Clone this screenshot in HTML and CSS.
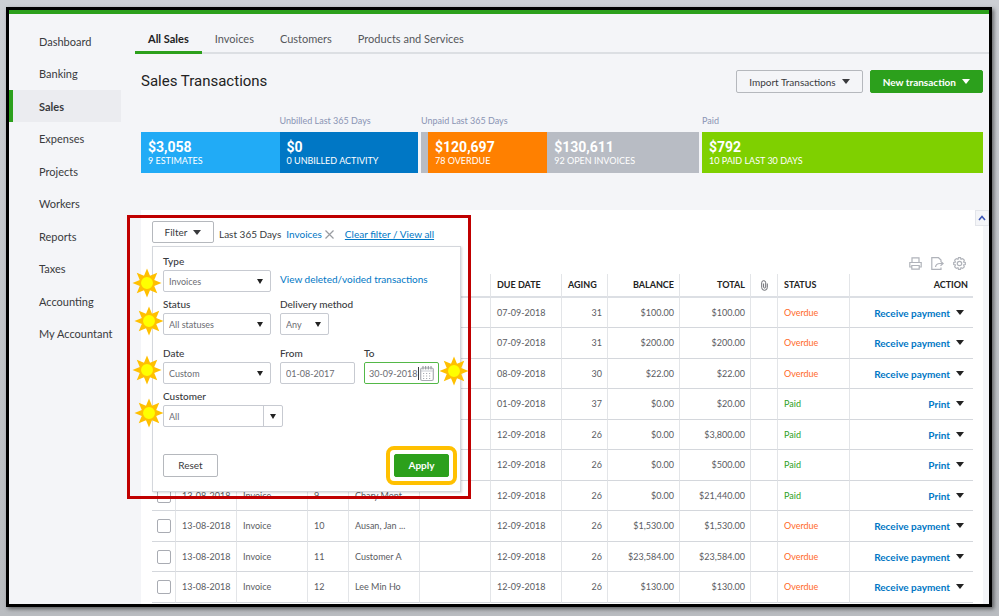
FILE: index.html
```html
<!DOCTYPE html>
<html lang="en">
<head>
  <meta charset="UTF-8" />
  <meta name="viewport" content="width=device-width, initial-scale=1.0" />
  <title>Sales Transactions</title>
  <link rel="stylesheet" href="styles.css">
</head>
<body>
  <svg class="sprite" aria-hidden="true">
    <symbol id="sun" viewBox="0 0 30 30">
      <g fill="#ffc000">
        <path id="ray" d="M15 0.5 L18.5 9 H11.5 Z" />
        <use href="#ray" transform="rotate(45 15 15)" />
        <use href="#ray" transform="rotate(90 15 15)" />
        <use href="#ray" transform="rotate(135 15 15)" />
        <use href="#ray" transform="rotate(180 15 15)" />
        <use href="#ray" transform="rotate(225 15 15)" />
        <use href="#ray" transform="rotate(270 15 15)" />
        <use href="#ray" transform="rotate(315 15 15)" />
      </g>
      <circle cx="15" cy="15" r="6.7" fill="#ffff00" stroke="#ffc000" stroke-width="1.5" />
    </symbol>
  </svg>

  <div class="frame">
    <div class="app">
      <nav class="sidebar">
        <ul>
          <li><a href="#">Dashboard</a></li>
          <li><a href="#">Banking</a></li>
          <li class="active"><a href="#">Sales</a></li>
          <li><a href="#">Expenses</a></li>
          <li><a href="#">Projects</a></li>
          <li><a href="#">Workers</a></li>
          <li><a href="#">Reports</a></li>
          <li><a href="#">Taxes</a></li>
          <li><a href="#">Accounting</a></li>
          <li><a href="#">My Accountant</a></li>
        </ul>
      </nav>

      <main>
        <div class="tabs">
          <a href="#" class="current">All Sales</a>
          <a href="#">Invoices</a>
          <a href="#">Customers</a>
          <a href="#">Products and Services</a>
        </div>

        <div class="content">
          <header class="title-row">
            <h1>Sales Transactions</h1>
            <button type="button" class="btn">Import Transactions <i class="caret"></i></button>
            <button type="button" class="btn green">New transaction <i class="caret"></i></button>
          </header>

          <section class="money-bar">
            <div class="group estimates">
              <span class="caption">Unbilled Last 365 Days</span>
              <div class="bars">
                <div class="bar light-blue"><strong>$3,058</strong><span>9 ESTIMATES</span></div>
                <div class="bar blue"><strong>$0</strong><span>0 UNBILLED ACTIVITY</span></div>
              </div>
            </div>
            <div class="group unpaid">
              <span class="caption">Unpaid Last 365 Days</span>
              <div class="bars">
                <div class="bar orange"><strong>$120,697</strong><span>78 OVERDUE</span></div>
                <div class="bar gray"><strong>$130,611</strong><span>92 OPEN INVOICES</span></div>
              </div>
            </div>
            <div class="group">
              <span class="caption">Paid</span>
              <div class="bars">
                <div class="bar lime"><strong>$792</strong><span>10 PAID LAST 30 DAYS</span></div>
              </div>
            </div>
          </section>

          <section class="card">
            <button type="button" class="collapse" aria-label="Collapse">
              <svg width="8" height="6" viewBox="0 0 8 6"><path d="M1 5 L4 1.5 L7 5" fill="none" stroke="#3b55b5" stroke-width="1.6" /></svg>
            </button>

            <div class="filter-bar">
              <button type="button" class="btn filter">Filter <i class="caret"></i></button>
              <span class="range">Last 365 Days</span>
              <a href="#">Invoices</a>
              <button type="button" class="remove" aria-label="Remove filter">
                <svg width="9" height="9" viewBox="0 0 9 9"><path d="M0.5 0.5 L8.5 8.5 M8.5 0.5 L0.5 8.5" stroke="#999ca1" stroke-width="1.2" /></svg>
              </button>
              <a href="#" class="clear">Clear filter / View all</a>
            </div>

            <div class="tools">
              <button type="button" aria-label="Print">
                <svg viewBox="0 0 13 13"><path d="M3 5.5 V0.8 H10 V5.5 M2.5 10 H0.8 V5.5 H12.2 V10 H10.5 M2.8 8.5 H10.2 V12.2 H2.8 Z" /></svg>
              </button>
              <button type="button" aria-label="Export">
                <svg viewBox="0 0 13 13"><path d="M10 4 V3 L7.5 0.7 H0.8 V12.3 H10 V10.5 M4.5 10 Q5 6.5 9 6.5 H11.5 M9.5 4.2 L12.2 6.5 L9.5 8.8" /></svg>
              </button>
              <button type="button" aria-label="Settings">
                <svg viewBox="0 0 13 13"><circle cx="6.5" cy="6.5" r="2.2" /><path d="M5.5 0.7 H7.5 L8 2.3 L9.7 1.6 L11.3 3.2 L10.6 5 L12.3 5.5 V7.5 L10.6 8 L11.3 9.8 L9.7 11.4 L8 10.7 L7.5 12.3 H5.5 L5 10.7 L3.3 11.4 L1.7 9.8 L2.4 8 L0.7 7.5 V5.5 L2.4 5 L1.7 3.2 L3.3 1.6 L5 2.3 Z" /></svg>
              </button>
            </div>

            <table>
              <colgroup>
                <col class="c-check"><col class="c-date"><col class="c-wide"><col class="c-no"><col class="c-wide"><col class="c-wide">
                <col class="c-wide"><col class="c-aging"><col class="c-status"><col class="c-wide"><col class="c-clip"><col class="c-status"><col>
              </colgroup>
              <thead>
                <tr>
                  <th></th><th></th><th></th><th></th><th></th><th>P.O. NO.</th>
                  <th>DUE DATE</th><th>AGING</th><th class="num">BALANCE</th><th class="num">TOTAL</th>
                  <th class="clip"><svg width="7" height="11" viewBox="0 0 7 11"><path d="M6.3 3.5 V7.5 A2.8 2.8 0 0 1 0.7 7.5 V2.7 A2 2 0 0 1 4.7 2.7 V7.3 A1.1 1.1 0 0 1 2.6 7.3 V3.5" fill="none" stroke="#6b6c72" /></svg></th>
                  <th>STATUS</th><th class="num">ACTION</th>
                </tr>
              </thead>
              <tbody id="rows"></tbody>
            </table>

            <form class="panel">
              <div class="field">
                <label for="type">Type</label>
                <select id="type"><option>Invoices</option></select>
              </div>
              <a href="#" class="voided">View deleted/voided transactions</a>

              <div class="field">
                <label for="status">Status</label>
                <select id="status"><option>All statuses</option></select>
              </div>
              <div class="field wide">
                <label for="delivery">Delivery method</label>
                <select id="delivery"><option>Any</option></select>
              </div>

              <div class="field dates">
                <label for="date">Date</label>
                <select id="date"><option>Custom</option></select>
              </div>
              <div class="field dates">
                <label for="from">From</label>
                <input type="text" id="from" value="01-08-2017">
              </div>
              <div class="field dates">
                <label for="to">To</label>
                <div class="picker">
                  <input type="text" id="to" value="30-09-2018">
                  <svg width="17" height="17" viewBox="0 0 17 17" fill="none">
                    <path d="M0.5 2 V15" stroke="#393a3d" />
                    <rect x="2.7" y="3" width="12.6" height="12.5" rx="1.5" stroke="#a9acb3" stroke-width="1.2" />
                    <path d="M3 6 H15" stroke="#c7cad1" />
                    <path d="M5 1 V4.5 M7.7 1 V4.5 M10.3 1 V4.5 M13 1 V4.5" stroke="#8d9096" />
                    <path d="M5 8.5 H14 M5 11 H14 M5 13.5 H14" stroke="#a9acb3" stroke-width="1.2" stroke-dasharray="1.2 1.8" />
                  </svg>
                </div>
              </div>

              <div class="field all">
                <label for="customer">Customer</label>
                <select id="customer" class="combo"><option>All</option></select>
              </div>

              <div class="actions">
                <button type="button" class="btn">Reset</button>
                <span class="ring"><button type="button" class="btn green">Apply</button></span>
              </div>
            </form>

            <!-- callouts over the filter -->
            <div class="callout"></div>
            <svg class="sun sun-type"><use href="#sun" /></svg>
            <svg class="sun sun-status"><use href="#sun" /></svg>
            <svg class="sun sun-date"><use href="#sun" /></svg>
            <svg class="sun sun-customer"><use href="#sun" /></svg>
            <svg class="sun sun-to"><use href="#sun" /></svg>
          </section>
        </div>
      </main>
    </div>
  </div>

  <script>
    // date, type, number, customer, due date, aging, balance, total, status
    const invoices = [
      ["", "", "", "", "07-09-2018", 31, "$100.00", "$100.00", "Overdue"],
      ["", "", "", "", "07-09-2018", 31, "$200.00", "$200.00", "Overdue"],
      ["", "", "", "", "08-09-2018", 30, "$22.00", "$22.00", "Overdue"],
      ["", "", "", "", "01-09-2018", 37, "$0.00", "$20.00", "Paid"],
      ["", "", "", "", "12-09-2018", 26, "$0.00", "$3,800.00", "Paid"],
      ["", "", "", "", "12-09-2018", 26, "$0.00", "$500.00", "Paid"],
      ["13-08-2018", "Invoice", 9, "Chary Mont ...", "12-09-2018", 26, "$0.00", "$21,440.00", "Paid"],
      ["13-08-2018", "Invoice", 10, "Ausan, Jan ...", "12-09-2018", 26, "$1,530.00", "$1,530.00", "Overdue"],
      ["13-08-2018", "Invoice", 11, "Customer A", "12-09-2018", 26, "$23,584.00", "$23,584.00", "Overdue"],
      ["13-08-2018", "Invoice", 12, "Lee Min Ho", "12-09-2018", 26, "$130.00", "$130.00", "Overdue"]
    ];

    document.getElementById("rows").innerHTML = invoices.map(([date, type, no, customer, due, aging, balance, total, status]) => `
      <tr>
        <td class="check"><input type="checkbox" aria-label="Select invoice ${no}"></td>
        <td>${date}</td>
        <td>${type}</td>
        <td>${no}</td>
        <td>${customer}</td>
        <td></td>
        <td>${due}</td>
        <td class="num">${aging}</td>
        <td class="num">${balance}</td>
        <td class="num">${total}</td>
        <td></td>
        <td class="${status.toLowerCase()}">${status}</td>
        <td class="num action"><a href="#">${status === "Paid" ? "Print" : "Receive payment"}</a><i class="caret"></i></td>
      </tr>`).join("");
  </script>
</body>
</html>
```
FILE: styles.css
```css
* {
  box-sizing: border-box;
}
body {
  margin: 0;
  height: 100vh;
  padding: 7px 7px 9px 6px;
  font-family: Lato, "Liberation Sans", sans-serif;
  font-size: 11px;
  color: #393a3d;
  background: linear-gradient(#cccfd4, #b9bcc0);
}
a {
  color: #0077c5;
  text-decoration: none;
}
button, input, select {
  font-family: inherit;
  font-size: inherit;
  color: inherit;
}
.sprite {
  position: absolute;
  width: 0;
  height: 0;
}
.frame {
  height: 100%;
  overflow: hidden;
  border: 3px solid #000;
  box-shadow: 2px 2px 4px rgba(0, 0, 0, 0.5);
  background: #f4f5f8;
}
.app {
  display: flex;
  min-height: 100%;
  border-top: 4px solid #2ca01c;
}

/* sidebar */
.sidebar {
  width: 112px;
  padding-top: 11px;
}
.sidebar ul {
  list-style: none;
  margin: 0;
  padding: 0;
}
.sidebar li {
  display: flex;
  align-items: center;
  height: 32px;
  padding-left: 26px;
  border-left: 4px solid transparent;
}
.sidebar li:nth-child(even) {
  height: 33px;
}
.sidebar a {
  color: #393a3d;
}
.sidebar .active {
  border-left-color: #2ca01c;
  background: #ebecf0;
  font-weight: bold;
}

/* tabs */
main {
  flex: 1;
  min-width: 0;
}
.tabs {
  display: flex;
  height: 40px;
  margin-left: 14px;
  border-bottom: 2px solid #dcdfe3;
}
.tabs a {
  height: 40px;
  padding: 0 13px;
  line-height: 50px;
  color: #55575b;
}
.tabs .current {
  color: #222;
  font-weight: bold;
  border-bottom: 3px solid #2ca01c;
}
.content {
  padding: 16px 6px 0 20px;
}

/* title */
.title-row {
  display: flex;
  gap: 7px;
}
h1 {
  flex: 1;
  margin: 0;
  font-family: Roboto, sans-serif;
  font-size: 15px;
  font-weight: normal;
  line-height: 23px;
  color: #222;
}
.btn {
  display: inline-flex;
  align-items: center;
  justify-content: center;
  gap: 6px;
  height: 23px;
  padding: 0 12px;
  border: 1px solid #b5b8bd;
  border-radius: 2px;
  background: transparent;
  font-size: 10px;
  cursor: pointer;
}
.btn.green {
  border-color: #2ca01c;
  background: #2ca01c;
  color: white;
  font-weight: bold;
}
.caret {
  border: 4px solid transparent;
  border-top: 5px solid currentColor;
  border-bottom: 0;
}

/* money bar */
.money-bar {
  display: grid;
  grid-template-columns: 277fr 278fr 281fr;
  gap: 3px;
  margin-top: 20px;
}
.caption {
  display: block;
  height: 19px;
  line-height: 16px;
  font-size: 9px;
  color: #8a94b4;
}
.estimates .caption {
  margin-left: 50%;
}
.bars {
  display: flex;
  color: white;
}
.bar {
  flex: 1;
  height: 41px;
  padding: 7px;
  font-size: 9px;
  line-height: 11px;
}
.bar strong {
  display: block;
  font-family: Roboto, sans-serif;
  font-size: 14px;
  line-height: 16px;
}
.light-blue { background: #21abf6; }
.blue { background: #0077c5; }
.gray { background: #b8bcc4; }
.lime { background: #7fd000; }
.orange {
  flex: 0 0 44%;
  background: #ff8000;
}
.unpaid .bars {
  padding-left: 7px;
  background: #b8bcc4;
}

/* transactions card */
.card {
  position: relative;
  margin-top: 37px;
  padding: 11px 10px 20px 11px;
  background: white;
}
.collapse {
  position: absolute;
  top: 0;
  right: -6px;
  width: 14px;
  height: 16px;
  padding: 0;
  border: 1px solid #e3e5ea;
  background: #f4f5f8;
}
.collapse svg {
  display: block;
  margin: 0 auto;
}
.filter-bar {
  display: flex;
  height: 22px;
  line-height: 27px;
  font-size: 10px;
}
.filter {
  width: 62px;
  height: 22px;
}
.range {
  margin: 0 5px;
}
.remove {
  height: 27px;
  padding: 0 3px;
  border: 0;
  background: none;
}
.clear {
  margin-left: 8px;
  text-decoration: underline;
}
.tools {
  display: flex;
  justify-content: flex-end;
  gap: 9px;
  height: 31px;
  padding: 14px 7px 0 0;
}
.tools button {
  width: 13px;
  height: 13px;
  padding: 0;
  border: 0;
  background: none;
}
.tools svg {
  display: block;
  fill: none;
  stroke: #b0b3ba;
  stroke-width: 1.2;
}

/* table */
table {
  width: 100%;
  table-layout: fixed;
  border-collapse: separate;
  border-spacing: 0;
  font-size: 9px;
}
.c-check { width: 24px; }
.c-date { width: 61px; }
.c-wide { width: 71px; }
.c-no { width: 41px; }
.c-aging { width: 46px; }
.c-clip { width: 27px; }
.c-status { width: 72px; }
th, td {
  height: 30px;
  padding: 0 6px 1px;
  border-right: 1px solid #e3e5e8;
  border-bottom: 1px solid #d4d7dc;
  text-align: left;
  white-space: nowrap;
}
tr:nth-child(even) td {
  height: 31px;
}
th {
  height: 24px;
  border-bottom: 2px solid #dcdfe4;
  color: #222;
}
td {
  color: #5a5b5f;
}
th:last-child, td:last-child {
  border-right: 0;
}
.num {
  padding-right: 5px;
  text-align: right;
}
.clip, .check {
  padding: 0;
  text-align: center;
}
.clip svg {
  vertical-align: middle;
}
.check input {
  display: block;
  appearance: none;
  width: 14px;
  height: 14px;
  margin: 0 0 0 5px;
  border: 1px solid #a9acb3;
  border-radius: 2px;
}
.overdue { color: #ff6a28; }
.paid { color: #2ca01c; }
.action {
  padding-right: 9px;
}
.action a {
  font-size: 10px;
  line-height: 12px;
  font-weight: bold;
  vertical-align: middle;
}
.action .caret {
  display: inline-block;
  margin-left: 6px;
  color: #222;
  vertical-align: middle;
}

/* filter panel */
.panel {
  position: absolute;
  top: 36px;
  left: 11px;
  width: 309px;
  display: grid;
  grid-template-columns: 108px 75px 75px;
  column-gap: 9px;
  row-gap: 5px;
  padding: 7px 10px;
  border: 1px solid #d4d7dc;
  box-shadow: 1px 1px 2px rgba(0, 0, 0, 0.15);
  background: white;
}
.field label {
  display: block;
  height: 16px;
  line-height: 15px;
  font-size: 10px;
  font-weight: 500;
}
.field select, .field input {
  display: block;
  width: 100%;
  height: 22px;
  padding: 0 5px;
  border: 1px solid #c7cad1;
  border-radius: 2px;
  font-size: 9px;
  color: #6b6c72;
  background: white;
}
.field select {
  appearance: none;
  background: white url("data:image/svg+xml,%3Csvg xmlns='http://www.w3.org/2000/svg' width='6' height='5'%3E%3Cpath d='M0 0h6L3 5z' fill='%23222'/%3E%3C/svg%3E") no-repeat right 7px center;
}
.voided {
  grid-column: span 2;
  margin-top: 19px;
  font-size: 10px;
}
.wide {
  grid-column: span 2;
}
.wide select {
  width: 49px;
}
.dates {
  margin-top: 6px;
}
.all {
  grid-column: span 3;
}
.field .combo {
  width: 120px;
  background:
    url("data:image/svg+xml,%3Csvg xmlns='http://www.w3.org/2000/svg' width='6' height='5'%3E%3Cpath d='M0 0h6L3 5z' fill='%23222'/%3E%3C/svg%3E") no-repeat right 6px center,
    linear-gradient(#c7cad1, #c7cad1) no-repeat right 18px top / 1px 100%,
    white;
}
.picker {
  display: flex;
  align-items: center;
  height: 22px;
  padding-right: 3px;
  border: 1px solid #53b847;
  border-radius: 2px;
}
.picker input {
  flex: 1;
  min-width: 0;
  height: 20px;
  padding: 0 0 0 4px;
  border: 0;
}
.actions {
  grid-column: span 3;
  display: flex;
  align-items: center;
  justify-content: space-between;
  height: 38px;
  margin: 14px -18px 0 0;
}
.actions .btn {
  width: 55px;
}
.ring {
  display: flex;
  padding: 4px;
  border: 4px solid #ffc000;
  border-radius: 8px;
}

/* callouts */
.callout {
  position: absolute;
  top: 5px;
  left: -14px;
  width: 344px;
  height: 284px;
  border: 3px solid #c00000;
}
.sun {
  position: absolute;
  width: 30px;
  height: 30px;
}
.sun-type { top: 58px; left: -9px; }
.sun-status { top: 96px; left: -7px; }
.sun-date { top: 145px; left: -9px; }
.sun-customer { top: 188px; left: -7px; }
.sun-to { top: 146px; left: 298px; }
```
